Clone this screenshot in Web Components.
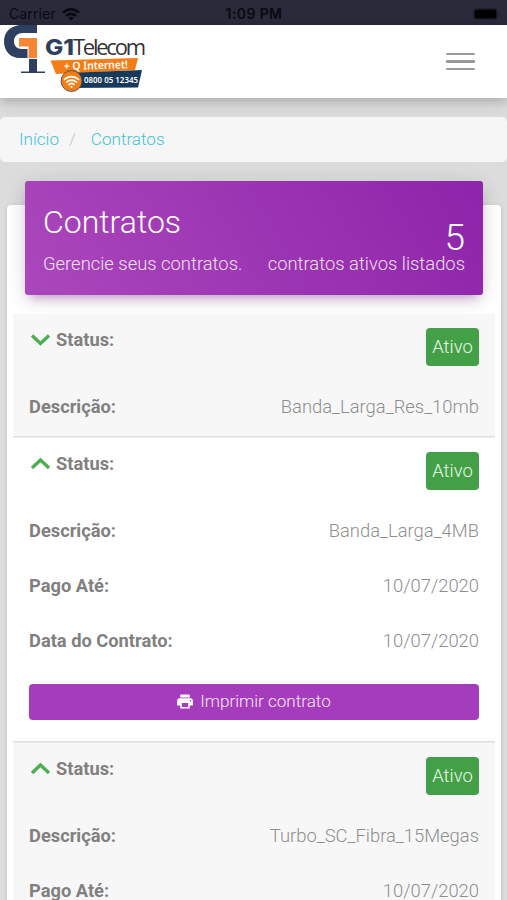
<!DOCTYPE html>
<html lang="pt-BR">
<head>
<meta charset="utf-8">
<meta name="viewport" content="width=device-width, initial-scale=1">
<title>Contratos</title>
<style>
  html {
    height: 100%;
    overflow: hidden;
  }
  body {
    margin: 0;
    height: 100%;
    overflow: hidden;
    background: #dcdcdc;
    color: #8e8e8e;
    font-family: Roboto, "Liberation Sans", sans-serif;
    font-size: 18.4px;
    font-weight: 300;
    line-height: 27px;
  }
</style>
</head>
<body>
<status-bar time="1:09 PM">Carrier</status-bar>
<app-navbar></app-navbar>
<bread-crumb>
  <a slot="root">Início</a>
  <a>Contratos</a>
</bread-crumb>
<contracts-card count="5">
  <span slot="title">Contratos</span>
  <span slot="subtitle">Gerencie seus contratos.</span>
  <span slot="summary">contratos ativos listados</span>
  <contract-list></contract-list>
</contracts-card>

<script>
class StatusBar extends HTMLElement {
  constructor() {
    super();
    this.attachShadow({ mode: 'open' });
  }

  connectedCallback() {
    this.shadowRoot.innerHTML = `
      <style>
        :host {
          display: grid;
          grid-template-columns: 1fr auto 1fr;
          align-items: center;
          box-sizing: border-box;
          height: 25px;
          padding: 3px 8px 0 9px;
          background: #292a3a;
          color: #090a12;
          font: 400 14.2px/20px Inter, Roboto, sans-serif;
        }
        .carrier {
          display: flex;
          align-items: center;
          gap: 6px;
        }
        .time {
          font-weight: 600;
          font-size: 14px;
          letter-spacing: .4px;
        }
        .battery {
          justify-self: end;
          margin-right: -3px;
        }
        svg { display: block; }
      </style>
      <div class="carrier">
        <slot></slot>
        <svg width="18" height="13" viewBox="0 0 18 13" fill="none" stroke="currentColor" stroke-width="2.6">
          <path d="M1 4.6a11.5 11.5 0 0 1 16 0M4 7.9a7.2 7.2 0 0 1 10 0"/>
          <path d="M9 12.8 6.3 9.9a4 4 0 0 1 5.4 0z" fill="currentColor" stroke="none"/>
        </svg>
      </div>
      <div class="time">${this.getAttribute('time')}</div>
      <svg class="battery" width="29" height="12" viewBox="0 0 29 12" fill="#000">
        <rect x=".5" y=".5" width="24" height="11" rx="3" fill="none" stroke="#1d1e2a"/>
        <rect x="1.5" y="1.5" width="22" height="9" rx="2"/>
        <path d="M26 4v4c1.6-.6 1.6-3.4 0-4z" fill="#1d1e2a"/>
      </svg>
    `;
  }
}

class BrandLogo extends HTMLElement {
  constructor() {
    super();
    this.attachShadow({ mode: 'open' });
    this.shadowRoot.innerHTML = `
      <style>
        :host { display: block; width: 160px; height: 73px; }
        svg { display: block; }
      </style>
      <svg width="160" height="73" viewBox="0 25 160 73">
        <path d="M37 25H19C9 27 4 33 4 41.5 4 51.5 10.5 58 20 58h7.500V49H22c-5 0-8-3-8-7.500 0-5.500 3.500-8.500 9-8.500h14z" fill="#2f3f60"/>
        <path d="M19 38h18v20h-8.500V46.500H19z" fill="#f58634"/>
        <path d="M29 59h8v12.500h8V73H21v-1.500h8z" fill="#2f3f60"/>
        <text x="45" y="55" font-family="Inter, sans-serif" font-size="22" font-weight="800" fill="#2f3f60" textLength="29" lengthAdjust="spacingAndGlyphs">G1</text>
        <text x="73" y="55" font-family="'Open Sans', sans-serif" font-size="22" font-weight="400" fill="#333" textLength="73" lengthAdjust="spacing">Telecom</text>
        <path d="M50.5 60.5 138 58l-3 12-79 4z" fill="#f47d16"/>
        <path d="M66 73 142 70l-4 17.5-72 .5z" fill="#17395c"/>
        <g font-family="'Noto Sans', sans-serif" font-weight="600" fill="#fff">
          <text x="64" y="70" font-size="11" textLength="64" lengthAdjust="spacingAndGlyphs" transform="rotate(-1.5 64 70)">+ Q Internet!</text>
          <text x="84" y="82.5" font-size="8" textLength="54" lengthAdjust="spacingAndGlyphs">0800 05 12345</text>
        </g>
        <circle cx="71.5" cy="81" r="10.5" fill="#f47d16" stroke="#3a4560" stroke-width=".8"/>
        <g fill="none" stroke="#fff" stroke-width="1.7" stroke-linecap="round">
          <path d="M64.5 79.5a10 10 0 0 1 14 0M66.7 82a7 7 0 0 1 9.6 0M68.9 84.5a4 4 0 0 1 5.2 0"/>
        </g>
        <circle cx="71.5" cy="86.8" r="1.1" fill="#fff"/>
      </svg>
    `;
  }
}

class AppNavbar extends HTMLElement {
  constructor() {
    super();
    this.attachShadow({ mode: 'open' });
    this.shadowRoot.innerHTML = `
      <style>
        :host {
          display: flex;
          justify-content: space-between;
          align-items: center;
          height: 73px;
          padding-right: 32px;
          background: #fff;
          box-shadow: 0 4px 18px rgba(0, 0, 0, .1), 0 4px 8px rgba(0, 0, 0, .13);
        }
        .toggler {
          display: flex;
          flex-direction: column;
          gap: 5px;
          padding: 0;
          border: 0;
          background: none;
        }
        .toggler span {
          width: 29px;
          height: 2.5px;
          border-radius: 1px;
          background: #999;
        }
      </style>
      <brand-logo></brand-logo>
      <button class="toggler" aria-label="Menu"><span></span><span></span><span></span></button>
    `;
  }
}

class BreadCrumb extends HTMLElement {
  constructor() {
    super();
    this.attachShadow({ mode: 'open' });
    this.shadowRoot.innerHTML = `
      <style>
        :host {
          display: flex;
          align-items: center;
          box-sizing: border-box;
          height: 45px;
          margin-top: 19px;
          padding: 0 19px 1px;
          border-radius: 5px;
          background: #f6f6f6;
          color: #3fc3d6;
          font-size: 17.1px;
        }
        .sep {
          margin: 0 15px 0 10px;
          color: #c4c4c4;
        }
      </style>
      <slot name="root"></slot><span class="sep">/</span><slot></slot>
    `;
  }
}

class ContractsCard extends HTMLElement {
  constructor() {
    super();
    this.attachShadow({ mode: 'open' });
  }

  connectedCallback() {
    this.shadowRoot.innerHTML = `
      <style>
        :host {
          display: flow-root;
          margin: 43px 6px 0 7px;
          padding: 0 6px;
          border-radius: 4px;
          background: #fff;
          box-shadow: 0 1px 4px rgba(0, 0, 0, .14);
        }
        /* header hangs over the top edge of the card */
        header {
          display: flex;
          justify-content: space-between;
          align-items: flex-end;
          box-sizing: border-box;
          height: 114px;
          margin: -24px 12px 19px;
          padding: 0 18px 18px;
          border-radius: 3px;
          background: linear-gradient(60deg, #ab47bc, #8e24aa);
          color: #fff;
          box-shadow: 0 4px 20px rgba(0, 0, 0, .14), 0 7px 10px -5px rgba(156, 39, 176, .4);
        }
        h4 {
          margin: 0 0 10px;
          font-size: 32px;
          font-weight: 300;
          line-height: 36px;
        }
        p {
          margin: 0;
          opacity: .85;
        }
        .total { text-align: right; }
        .total h4 {
          margin: 0 0 -6px;
          font-size: 37px;
          line-height: 36px;
        }
      </style>
      <header>
        <div>
          <h4><slot name="title"></slot></h4>
          <p><slot name="subtitle"></slot></p>
        </div>
        <div class="total">
          <h4>${this.getAttribute('count')}</h4>
          <p><slot name="summary"></slot></p>
        </div>
      </header>
      <slot></slot>
    `;
  }
}

class ContractItem extends HTMLElement {
  constructor() {
    super();
    this.attachShadow({ mode: 'open' });
  }

  connectedCallback() {
    const c = this.contract;
    const arrow = c.closed ? 'M2 1.5l8.500 8 8.500-8' : 'M2 10l8.500-8 8.500 8';
    const fields = c.fields.map(([label, value]) => `
      <div class="row"><b>${label}:</b><span>${value}</span></div>
    `).join('');

    this.shadowRoot.innerHTML = `
      <style>
        :host {
          display: block;
          box-sizing: border-box;
          padding: 0 16px;
        }
        :host(:not(:first-child)) { box-shadow: inset 0 1.5px #dedede; }
        .row {
          display: flex;
          justify-content: space-between;
          box-sizing: border-box;
          height: 55px;
          padding-top: 12px;
        }
        .status { height: 67px; }
        b {
          color: #808080;
          font-size: 18.3px;
          font-weight: 700;
        }
        .status b {
          display: flex;
          align-items: center;
          align-self: flex-start;
          gap: 5px;
        }
        .badge {
          width: 53px;
          height: 38px;
          margin-top: 2px;
          border-radius: 4px;
          background: #43a047;
          color: #eafbe8;
          line-height: 37px;
          text-align: center;
        }
        button {
          display: flex;
          align-items: center;
          justify-content: center;
          gap: 7px;
          width: 100%;
          height: 36px;
          margin: 14px 0 21px;
          padding: 0 0 1px;
          border: 0;
          border-radius: 4px;
          background: #a43cbb;
          color: #fbe9ff;
          font: inherit;
          font-size: 17.1px;
        }
      </style>
      <div class="row status">
        <b>
          <svg width="22" height="12" viewBox="-1 0 22 12" fill="none" stroke="#4caf50" stroke-width="3.4"><path d="${arrow}"/></svg>
          Status:
        </b>
        <span class="badge">Ativo</span>
      </div>
      ${fields}
      ${c.printable ? `
        <button>
          <svg width="16" height="15" viewBox="2 2.5 20 19" fill="#fff"><path d="M19 8H5c-1.66 0-3 1.34-3 3v6h4v4h12v-4h4v-6c0-1.66-1.34-3-3-3zm-3 11H8v-5h8v5zm3-7c-.55 0-1-.45-1-1s.45-1 1-1 1 .45 1 1-.45 1-1 1zm-1-9H6v4h12V3z"/></svg>
          Imprimir contrato
        </button>` : ''}
    `;
  }
}

class ContractList extends HTMLElement {
  constructor() {
    super();
    this.attachShadow({ mode: 'open' });
    this.contracts = [
      {
        closed: true,
        fields: [['Descrição', 'Banda_Larga_Res_10mb']]
      },
      {
        printable: true,
        fields: [
          ['Descrição', 'Banda_Larga_4MB'],
          ['Pago Até', '10/07/2020'],
          ['Data do Contrato', '10/07/2020']
        ]
      },
      {
        fields: [
          ['Descrição', 'Turbo_SC_Fibra_15Megas'],
          ['Pago Até', '10/07/2020']
        ]
      }
    ];
  }

  connectedCallback() {
    this.shadowRoot.innerHTML = `
      <style>
        :host { display: block; }
        contract-item:nth-child(odd) { background: #f7f7f7; }
        contract-item + contract-item { padding-top: 2px; }
      </style>
      <div></div>
    `;
    const list = this.shadowRoot.querySelector('div');
    this.contracts.forEach(contract => {
      const item = document.createElement('contract-item');
      item.contract = contract;
      list.appendChild(item);
    });
  }
}

customElements.define('status-bar', StatusBar);
customElements.define('brand-logo', BrandLogo);
customElements.define('app-navbar', AppNavbar);
customElements.define('bread-crumb', BreadCrumb);
customElements.define('contract-item', ContractItem);
customElements.define('contract-list', ContractList);
customElements.define('contracts-card', ContractsCard);
</script>
</body>
</html>
